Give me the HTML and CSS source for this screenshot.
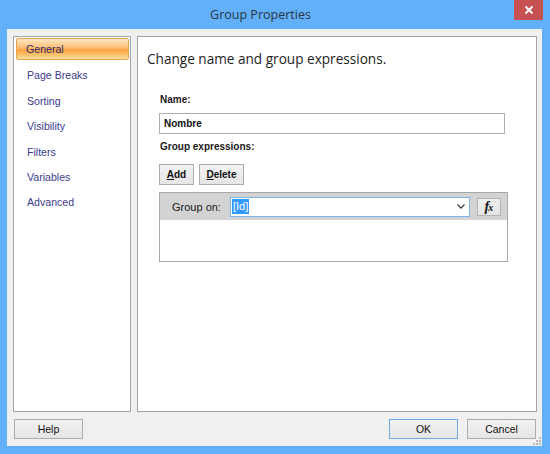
FILE: index.html
```html
<!DOCTYPE html>
<html>
<head>
<meta charset="utf-8">
<link rel="stylesheet" href="styles.css">
</head>
<body>
<div class="window">
  <div class="titlebar">
    <div class="title">Group Properties</div>
    <div class="close">
      <svg width="10" height="10" viewBox="0 0 10 10"><path d="M1.5 1.5 L8.5 8.5 M8.5 1.5 L1.5 8.5" stroke="#fff" stroke-width="2" fill="none"/></svg>
    </div>
  </div>
  <div class="client">
    <div class="panes">
      <ul class="nav">
        <li class="nav-item selected">General</li>
        <li class="nav-item">Page Breaks</li>
        <li class="nav-item">Sorting</li>
        <li class="nav-item">Visibility</li>
        <li class="nav-item">Filters</li>
        <li class="nav-item">Variables</li>
        <li class="nav-item">Advanced</li>
      </ul>
      <div class="main">
        <h1 class="heading">Change name and group expressions.</h1>
        <div class="form">
          <div class="label">Name:</div>
          <div class="textbox">Nombre</div>
          <div class="label label-gap">Group expressions:</div>
          <div class="btnrow">
            <button class="btn btn-add"><u>A</u>dd</button>
            <button class="btn btn-delete"><u>D</u>elete</button>
          </div>
          <div class="grid">
            <div class="grid-head">
              <span class="group-on">Group on:</span>
              <div class="combo">
                <span class="sel">[Id]</span>
                <svg class="chev" width="8" height="5" viewBox="0 0 8 5"><path d="M0.5 0.5 L4 4 L7.5 0.5" stroke="#444" stroke-width="1.3" fill="none"/></svg>
              </div>
              <button class="fx"><span class="fx-f">f</span><span class="fx-x">x</span></button>
            </div>
            <div class="grid-body"></div>
          </div>
        </div>
      </div>
    </div>
    <div class="footer">
      <button class="btn fbtn help">Help</button>
      <button class="btn fbtn ok">OK</button>
      <button class="btn fbtn cancel">Cancel</button>
    </div>
    <svg class="grip" width="8" height="8" viewBox="0 0 8 8">
      <rect x="6" y="0" width="2" height="2" fill="#b8b8b8"/>
      <rect x="3" y="3" width="2" height="2" fill="#b8b8b8"/>
      <rect x="6" y="3" width="2" height="2" fill="#b8b8b8"/>
      <rect x="0" y="6" width="2" height="2" fill="#b8b8b8"/>
      <rect x="3" y="6" width="2" height="2" fill="#b8b8b8"/>
      <rect x="6" y="6" width="2" height="2" fill="#b8b8b8"/>
    </svg>
  </div>
</div>
</body>
</html>
```

FILE: styles.css
```css
* { box-sizing: border-box; }
html, body { margin: 0; padding: 0; }
body {
  font-family: "Liberation Sans", Arial, sans-serif;
  background: #62b0f9;
}
.window {
  width: 550px;
  height: 454px;
  background: #62b0f9;
  display: flex;
  flex-direction: column;
}
.titlebar {
  height: 29px;
  display: flex;
  align-items: flex-start;
  padding: 0 7px;
  flex: none;
}
.title {
  flex: 1;
  text-align: center;
  font-family: "Open Sans", "Noto Sans", sans-serif;
  font-size: 12.5px;
  line-height: 29px;
  color: #2a3542;
}
.close {
  width: 29px;
  height: 20px;
  background: #c75050;
  display: flex;
  align-items: center;
  justify-content: center;
}
.client {
  position: relative;
  flex: 1;
  margin: 0 8px 8px 7px;
  background: #f0f0f0;
  padding: 7px 5px 7px 6px;
  display: flex;
  flex-direction: column;
}
.panes {
  height: 376px;
  display: flex;
  gap: 6px;
}
.nav {
  width: 118px;
  margin: 0;
  padding: 1px 1px 0 2px;
  list-style: none;
  background: #fff;
  border: 1px solid #a5a5a5;
}
.nav-item {
  height: 22px;
  line-height: 22px;
  margin-bottom: 3.4px;
  padding-left: 10px;
  font-size: 10.6px;
  color: #3b3b8c;
  border: 1px solid transparent;
}
.nav-item.selected {
  border: 1px solid #e5a44c;
  border-radius: 2px;
  line-height: 20px;
  padding-left: 9px;
  color: #2b2b6e;
  background: linear-gradient(#fde6c2 0%, #fcc27e 40%, #f9a443 55%, #fbc36a 80%, #fde3a6 100%);
}
.main {
  flex: 1;
  background: #fff;
  border: 1px solid #a5a5a5;
  padding: 12px 0 0 9px;
}
.heading {
  margin: 0;
  font-family: "Open Sans", "Noto Sans", sans-serif;
  font-weight: normal;
  font-size: 13.6px;
  line-height: 20px;
  color: #1e1e1e;
}
.form {
  margin: 24px 0 0 12px;
  width: 349px;
}
.label {
  font-size: 10px;
  font-weight: bold;
  line-height: 14px;
  color: #1a1a1a;
  padding-left: 1px;
}
.label-gap { margin-top: 6px; }
.textbox {
  margin-top: 6px;
  width: 346px;
  height: 21px;
  border: 1px solid #abadb3;
  padding-left: 4px;
  font-size: 10px;
  font-weight: bold;
  line-height: 19px;
  color: #111;
}
.btnrow {
  margin-top: 10px;
  display: flex;
  gap: 5px;
}
.btn {
  font-family: "Liberation Sans", Arial, sans-serif;
  height: 21px;
  padding: 0;
  border: 1px solid #acacac;
  background: linear-gradient(#f2f2f2, #e5e5e5);
  color: #111;
  font-size: 10.5px;
  line-height: 19px;
}
.btn-add { width: 35px; font-weight: bold; font-size: 10px; }
.btn-delete { width: 45px; font-weight: bold; font-size: 10px; }
.grid {
  margin-top: 7px;
  width: 349px;
  border: 1px solid #a8a8a8;
}
.grid-head {
  height: 27px;
  background: #d3d3d3;
  display: flex;
  align-items: center;
  padding-left: 12px;
}
.group-on {
  font-size: 11px;
  color: #1a1a1a;
}
.combo {
  margin-left: 9px;
  width: 240px;
  height: 20px;
  background: #fff;
  border: 1px solid #7eb4ea;
  display: flex;
  align-items: center;
  padding-left: 1px;
  padding-right: 4px;
}
.sel {
  background: #3399ff;
  color: #fff;
  font-size: 11px;
  line-height: 15px;
  padding: 0 1px;
}
.chev { margin-left: auto; }
.fx {
  margin-left: 7px;
  width: 24px;
  height: 18px;
  padding: 0;
  border: 1px solid #b4b4b4;
  background: linear-gradient(#f0f0f0, #e3e3e3);
  font-family: "Liberation Serif", "Times New Roman", serif;
  font-style: italic;
  font-weight: bold;
  color: #111;
  line-height: 16px;
}
.fx-f { font-size: 14px; }
.fx-x { font-size: 10px; margin-left: -1px; }
.grid-body {
  height: 41px;
  background: #fff;
}
.footer {
  margin-top: 7px;
  height: 20px;
  display: flex;
  gap: 9px;
  padding: 0 1px 0 1px;
}
.fbtn {
  width: 69px;
  height: 20px;
  font-size: 10.5px;
  line-height: 18px;
}
.help { margin-right: auto; }
.ok { border-color: #6fa9e2; }
.grip {
  position: absolute;
  right: 1px;
  bottom: 1px;
}
```
